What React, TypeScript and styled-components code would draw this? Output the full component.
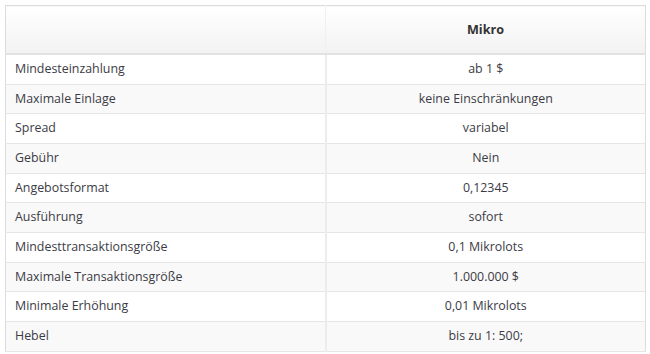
import React from 'react';
import styled, { createGlobalStyle } from 'styled-components';

const GlobalStyle = createGlobalStyle`
	html, body {
		margin: 0;
		padding: 0;
		background: #ffffff;
		overflow: hidden;
	}
`;

const Wrapper = styled.div`
	padding: 5px 4px 0 5px;
	font-family: 'Open Sans', 'Liberation Sans', sans-serif;
	font-size: 12.4px;
	color: #3b3b45;
`;

const Table = styled.table`
	width: 641px;
	border-collapse: collapse;
	table-layout: fixed;
	border: 1px solid #dcdcdc;
	border-bottom: 1px solid #e6e6e6;
`;

const HeadCell = styled.th<{ $first?: boolean }>`
	height: 47px;
	padding: 0 9px;
	font-weight: 700;
	font-size: 12.6px;
	text-align: center;
	color: #333;
	background: linear-gradient(to bottom, #ffffff 0%, #f2f2f2 100%);
	border-bottom: 2px solid #e2e2e2;
	border-left: ${({ $first }) => ($first ? 'none' : '1px solid #f0f0f0')};
`;

const Row = styled.tr<{ $striped: boolean }>`
	background: ${({ $striped }) => ($striped ? '#f9f9f9' : '#ffffff')};
`;

const Cell = styled.td<{ $center?: boolean }>`
	padding: 5px 9px;
	height: 18.67px;
	line-height: 18.67px;
	text-align: ${({ $center }) => ($center ? 'center' : 'left')};
	border-top: 1px solid #e6e6e6;
	border-left: ${({ $center }) => ($center ? '2px solid #ececec' : 'none')};
	white-space: nowrap;
`;

const rows: [string, string][] = [
	['Mindesteinzahlung', 'ab 1 $'],
	['Maximale Einlage', 'keine Einschränkungen'],
	['Spread', 'variabel'],
	['Gebühr', 'Nein'],
	['Angebotsformat', '0,12345'],
	['Ausführung', 'sofort'],
	['Mindesttransaktionsgröße', '0,1 Mikrolots'],
	['Maximale Transaktionsgröße', '1.000.000 $'],
	['Minimale Erhöhung', '0,01 Mikrolots'],
	['Hebel', 'bis zu 1: 500;'],
];

const App: React.FC = () => (
	<>
		<GlobalStyle />
		<Wrapper>
			<Table>
				<thead>
					<tr>
						<HeadCell $first></HeadCell>
						<HeadCell>Mikro</HeadCell>
					</tr>
				</thead>
				<tbody>
					{rows.map(([label, value], i) => (
						<Row key={label} $striped={i % 2 === 1}>
							<Cell>{label}</Cell>
							<Cell $center>{value}</Cell>
						</Row>
					))}
				</tbody>
			</Table>
		</Wrapper>
	</>
);

export default App;
